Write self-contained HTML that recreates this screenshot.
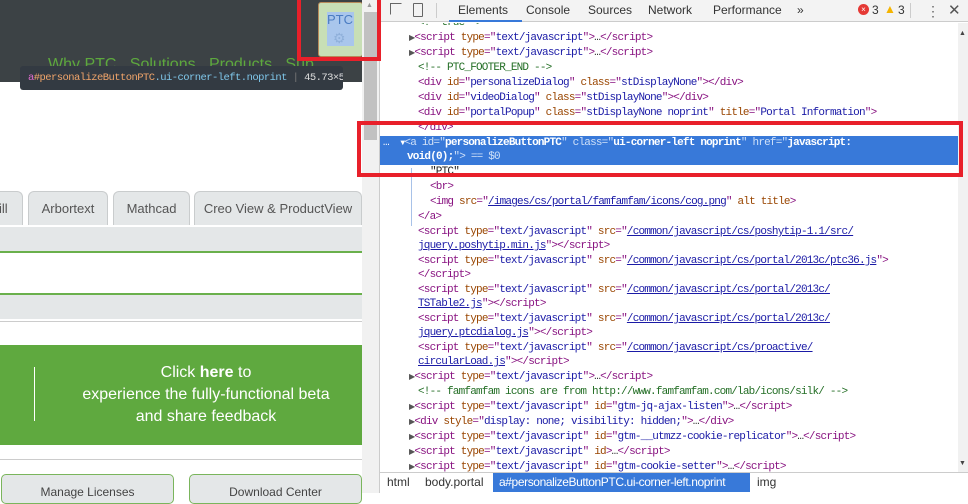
<!DOCTYPE html>
<html><head><meta charset="utf-8"><style>
*{margin:0;padding:0;box-sizing:border-box}
body{width:968px;height:493px;overflow:hidden;position:relative;background:#fff;font-family:"Liberation Sans",sans-serif}
.a{position:absolute}
.code{position:absolute;left:380px;top:23px;width:578px;height:449px;overflow:hidden;font-family:"Liberation Mono",monospace;font-size:11px;letter-spacing:-0.8px;color:#222}
.ln{position:absolute;white-space:pre;height:15px;line-height:15px}
.t{color:#881280}.n{color:#994500}.v{color:#1a1aa6}.c{color:#236e25}.u{color:#1a1aa6;text-decoration:underline}
.tab{position:absolute;top:191px;height:34px;background:#e4e7e8;border:1px solid #c9cccd;border-bottom:none;border-radius:6px 6px 0 0;font-size:13px;color:#555;text-align:center;line-height:34px}
.bc{position:absolute;top:0;height:19px;line-height:19px}
</style></head><body>
<div class="a" style="left:0;top:0;width:363px;height:82px;background:#3c4245"></div>
<div class="a" style="left:48px;top:56px;font-size:16px;color:#5da83e;white-space:pre">Why PTC   Solutions   Products   Sup</div>
<div class="a" style="left:318px;top:2px;width:45px;height:55px;background:#c8dfb6;border:1px solid #b88a5a;border-radius:3px"></div>
<div class="a" style="left:327px;top:12px;width:27px;height:34px;background:#a9c6ec"></div>
<div class="a" style="left:327px;top:12px;font-size:13px;color:#4a7cc2">PTC</div>
<div class="a" style="left:333px;top:30px;font-size:14px;color:#8fb0da">⚙</div>
<div class="a" style="left:20px;top:66px;width:323px;height:24px;background:#333a42;border-radius:3px;font-family:'Liberation Mono',monospace;font-size:10.5px;letter-spacing:-0.55px;line-height:24px;padding-left:8px;white-space:nowrap;overflow:hidden;color:#f0a46a"><span style="color:#e06ccf">a</span>#personalizeButtonPTC<span style="color:#7fc7ea">.ui-corner-left.noprint</span> <span style="color:#777">|</span> <span style="color:#ddd">45.73×56</span></div>
<div class="tab" style="left:-10px;width:33px;text-align:left;padding-left:8px">ill</div>
<div class="tab" style="left:28px;width:80px">Arbortext</div>
<div class="tab" style="left:113px;width:77px">Mathcad</div>
<div class="tab" style="left:194px;width:168px">Creo View &amp; ProductView</div>
<div class="a" style="left:0;top:227px;width:362px;height:24px;background:#e4e7e8"></div>
<div class="a" style="left:0;top:251px;width:362px;height:2px;background:#6ab04c"></div>
<div class="a" style="left:0;top:293px;width:362px;height:2px;background:#6ab04c"></div>
<div class="a" style="left:0;top:295px;width:362px;height:24px;background:#e4e7e8"></div>
<div class="a" style="left:0;top:321px;width:362px;height:1px;background:#ccc"></div>
<div class="a" style="left:0;top:345px;width:362px;height:100px;background:#5fa93f"></div>
<div class="a" style="left:34px;top:367px;width:1px;height:54px;background:#fff"></div>
<div class="a" style="left:60px;top:362px;width:292px;text-align:center;color:#fff;font-size:16px;line-height:22px">Click <b>here</b> to<br>experience the fully-functional beta<br>and share feedback</div>
<div class="a" style="left:0;top:459px;width:362px;height:1px;background:#ccc"></div>
<div class="a" style="left:1px;top:474px;width:173px;height:30px;background:#e4e7e8;border:1px solid #7ab55c;border-radius:5px;text-align:center;font-size:12px;color:#444;padding-top:10px">Manage Licenses</div>
<div class="a" style="left:189px;top:474px;width:173px;height:30px;background:#e4e7e8;border:1px solid #7ab55c;border-radius:5px;text-align:center;font-size:12px;color:#444;padding-top:10px">Download Center</div>
<div class="a" style="left:362px;top:0;width:17px;height:493px;background:#f1f1f1"></div>
<div class="a" style="left:364px;top:12px;width:13px;height:128px;background:#c1c1c1"></div>
<div class="a" style="left:366px;top:2px;font-size:7px;color:#999">▲</div>
<div class="a" style="left:379px;top:0;width:1px;height:493px;background:#ccc"></div>
<div class="a" style="left:380px;top:0;width:588px;height:22px;background:#f3f3f3;border-bottom:1px solid #ccc"></div>
<div class="a" style="left:390px;top:3px;width:12px;height:12px;border:1.5px solid #666;border-right-color:transparent;border-bottom-color:transparent"></div>
<div class="a" style="left:413px;top:3px;width:10px;height:14px;border:1.5px solid #666;border-radius:1px"></div>
<div class="a" style="left:436px;top:3px;width:1px;height:15px;background:#ccc"></div>
<div class="a" style="left:449px;top:0;width:73px;height:22px;border-bottom:2px solid #3879d9"></div>
<div class="a" style="left:380px;top:3px;font-size:12px;color:#333;white-space:pre;line-height:14px"><span style="position:absolute;left:78px">Elements</span><span style="position:absolute;left:146px">Console</span><span style="position:absolute;left:208px">Sources</span><span style="position:absolute;left:268px">Network</span><span style="position:absolute;left:333px">Performance</span><span style="position:absolute;left:417px">»</span></div>
<div class="a" style="left:858px;top:4px;width:11px;height:11px;border-radius:50%;background:#e53935;color:#fff;font-size:8px;text-align:center;line-height:11px">×</div>
<div class="a" style="left:872px;top:3px;font-size:12px;color:#333">3</div>
<div class="a" style="left:884px;top:2px;font-size:12px;color:#f4b400">▲</div>
<div class="a" style="left:898px;top:3px;font-size:12px;color:#333">3</div>
<div class="a" style="left:910px;top:3px;width:1px;height:15px;background:#ccc"></div>
<div class="a" style="left:926px;top:0;font-size:14px;color:#666;line-height:22px">⋮</div>
<div class="a" style="left:948px;top:1px;font-size:15px;color:#555">✕</div>
<div class="a" style="left:958px;top:23px;width:10px;height:449px;background:#f1f1f1"></div>
<div class="a" style="left:959px;top:30px;font-size:7px;color:#444">▲</div>
<div class="a" style="left:959px;top:460px;font-size:7px;color:#444">▼</div>
<div class="a" style="left:380px;top:136px;width:578px;height:29px;background:#3879d9"></div>
<div class="a" style="left:411px;top:168px;width:1px;height:58px;background:#a8c2e8"></div>
<div class="code">
<div class="ln" style="left:38px;top:-7px"><span class="c">&lt;!--true--&gt;</span></div>
<div class="ln" style="left:29px;top:8px"><span style="font-size:8px;color:#555">▶</span><span class="t">&lt;script </span><span class="n">type</span><span class="t">="</span><span class="v">text/javascript</span><span class="t">"&gt;</span>…<span class="t">&lt;/script&gt;</span></div>
<div class="ln" style="left:29px;top:23px"><span style="font-size:8px;color:#555">▶</span><span class="t">&lt;script </span><span class="n">type</span><span class="t">="</span><span class="v">text/javascript</span><span class="t">"&gt;</span>…<span class="t">&lt;/script&gt;</span></div>
<div class="ln" style="left:38px;top:38px"><span class="c">&lt;!-- PTC_FOOTER_END --&gt;</span></div>
<div class="ln" style="left:38px;top:53px"><span class="t">&lt;div </span><span class="n">id</span><span class="t">="</span><span class="v">personalizeDialog</span><span class="t">" </span><span class="n">class</span><span class="t">="</span><span class="v">stDisplayNone</span><span class="t">"&gt;&lt;/div&gt;</span></div>
<div class="ln" style="left:38px;top:68px"><span class="t">&lt;div </span><span class="n">id</span><span class="t">="</span><span class="v">videoDialog</span><span class="t">" </span><span class="n">class</span><span class="t">="</span><span class="v">stDisplayNone</span><span class="t">"&gt;&lt;/div&gt;</span></div>
<div class="ln" style="left:38px;top:83px"><span class="t">&lt;div </span><span class="n">id</span><span class="t">="</span><span class="v">portalPopup</span><span class="t">" </span><span class="n">class</span><span class="t">="</span><span class="v">stDisplayNone noprint</span><span class="t">" </span><span class="n">title</span><span class="t">="</span><span class="v">Portal Information</span><span class="t">"&gt;</span></div>
<div class="ln" style="left:38px;top:98px"><span class="t">&lt;/div&gt;</span></div>
<div class="ln" style="left:3px;top:113px;color:#fff"><span>…  </span><span style="font-size:8px">▼</span><span style="color:#cfe0f8">&lt;a </span><span style="color:#d6e4f8">id</span><span style="color:#cfe0f8">="</span><b>personalizeButtonPTC</b><span style="color:#cfe0f8">" class="</span><b>ui-corner-left noprint</b><span style="color:#cfe0f8">" href="</span><b>javascript:</b></div>
<div class="ln" style="left:27px;top:127px;color:#fff"><b>void(0);</b><span style="color:#cfe0f8">"&gt; == $0</span></div>
<div class="ln" style="left:50px;top:142px">"PTC"</div>
<div class="ln" style="left:50px;top:157px"><span class="t">&lt;br&gt;</span></div>
<div class="ln" style="left:50px;top:172px"><span class="t">&lt;img </span><span class="n">src</span><span class="t">="</span><span class="u">/images/cs/portal/famfamfam/icons/cog.png</span><span class="t">" </span><span class="n">alt title</span><span class="t">&gt;</span></div>
<div class="ln" style="left:38px;top:187px"><span class="t">&lt;/a&gt;</span></div>
<div class="ln" style="left:38px;top:202px"><span class="t">&lt;script </span><span class="n">type</span><span class="t">="</span><span class="v">text/javascript</span><span class="t">" </span><span class="n">src</span><span class="t">="</span><span class="u">/common/javascript/cs/poshytip-1.1/src/</span></div>
<div class="ln" style="left:38px;top:216px"><span class="u">jquery.poshytip.min.js</span><span class="t">"&gt;&lt;/script&gt;</span></div>
<div class="ln" style="left:38px;top:231px"><span class="t">&lt;script </span><span class="n">type</span><span class="t">="</span><span class="v">text/javascript</span><span class="t">" </span><span class="n">src</span><span class="t">="</span><span class="u">/common/javascript/cs/portal/2013c/ptc36.js</span><span class="t">"&gt;</span></div>
<div class="ln" style="left:38px;top:245px"><span class="t">&lt;/script&gt;</span></div>
<div class="ln" style="left:38px;top:260px"><span class="t">&lt;script </span><span class="n">type</span><span class="t">="</span><span class="v">text/javascript</span><span class="t">" </span><span class="n">src</span><span class="t">="</span><span class="u">/common/javascript/cs/portal/2013c/</span></div>
<div class="ln" style="left:38px;top:274px"><span class="u">TSTable2.js</span><span class="t">"&gt;&lt;/script&gt;</span></div>
<div class="ln" style="left:38px;top:289px"><span class="t">&lt;script </span><span class="n">type</span><span class="t">="</span><span class="v">text/javascript</span><span class="t">" </span><span class="n">src</span><span class="t">="</span><span class="u">/common/javascript/cs/portal/2013c/</span></div>
<div class="ln" style="left:38px;top:303px"><span class="u">jquery.ptcdialog.js</span><span class="t">"&gt;&lt;/script&gt;</span></div>
<div class="ln" style="left:38px;top:318px"><span class="t">&lt;script </span><span class="n">type</span><span class="t">="</span><span class="v">text/javascript</span><span class="t">" </span><span class="n">src</span><span class="t">="</span><span class="u">/common/javascript/cs/proactive/</span></div>
<div class="ln" style="left:38px;top:332px"><span class="u">circularLoad.js</span><span class="t">"&gt;&lt;/script&gt;</span></div>
<div class="ln" style="left:29px;top:347px"><span style="font-size:8px;color:#555">▶</span><span class="t">&lt;script </span><span class="n">type</span><span class="t">="</span><span class="v">text/javascript</span><span class="t">"&gt;</span>…<span class="t">&lt;/script&gt;</span></div>
<div class="ln" style="left:38px;top:362px"><span class="c">&lt;!-- famfamfam icons are from http://www.famfamfam.com/lab/icons/silk/ --&gt;</span></div>
<div class="ln" style="left:29px;top:377px"><span style="font-size:8px;color:#555">▶</span><span class="t">&lt;script </span><span class="n">type</span><span class="t">="</span><span class="v">text/javascript</span><span class="t">" </span><span class="n">id</span><span class="t">="</span><span class="v">gtm-jq-ajax-listen</span><span class="t">"&gt;</span>…<span class="t">&lt;/script&gt;</span></div>
<div class="ln" style="left:29px;top:392px"><span style="font-size:8px;color:#555">▶</span><span class="t">&lt;div </span><span class="n">style</span><span class="t">="</span><span class="v">display: none; visibility: hidden;</span><span class="t">"&gt;</span>…<span class="t">&lt;/div&gt;</span></div>
<div class="ln" style="left:29px;top:407px"><span style="font-size:8px;color:#555">▶</span><span class="t">&lt;script </span><span class="n">type</span><span class="t">="</span><span class="v">text/javascript</span><span class="t">" </span><span class="n">id</span><span class="t">="</span><span class="v">gtm-__utmzz-cookie-replicator</span><span class="t">"&gt;</span>…<span class="t">&lt;/script&gt;</span></div>
<div class="ln" style="left:29px;top:422px"><span style="font-size:8px;color:#555">▶</span><span class="t">&lt;script </span><span class="n">type</span><span class="t">="</span><span class="v">text/javascript</span><span class="t">" </span><span class="n">id</span><span class="t">&gt;</span>…<span class="t">&lt;/script&gt;</span></div>
<div class="ln" style="left:29px;top:437px"><span style="font-size:8px;color:#555">▶</span><span class="t">&lt;script </span><span class="n">type</span><span class="t">="</span><span class="v">text/javascript</span><span class="t">" </span><span class="n">id</span><span class="t">="</span><span class="v">gtm-cookie-setter</span><span class="t">"&gt;</span>…<span class="t">&lt;/script&gt;</span></div>
</div>
<div class="a" style="left:380px;top:472px;width:588px;height:21px;background:#fff;border-top:1px solid #ccc;font-size:12px;color:#333;white-space:pre"><span class="bc" style="left:7px">html</span><span class="bc" style="left:45px">body.portal</span><span class="bc" style="left:113px;width:257px;background:#3879d9;color:#fff;padding-left:6px;letter-spacing:-0.4px">a#personalizeButtonPTC.ui-corner-left.noprint</span><span class="bc" style="left:377px">img</span></div>
<div class="a" style="left:297px;top:-4px;width:84px;height:65px;border:4px solid #e8202a"></div>
<div class="a" style="left:357px;top:121px;width:606px;height:56px;border:4px solid #e8202a"></div>
</body></html>
